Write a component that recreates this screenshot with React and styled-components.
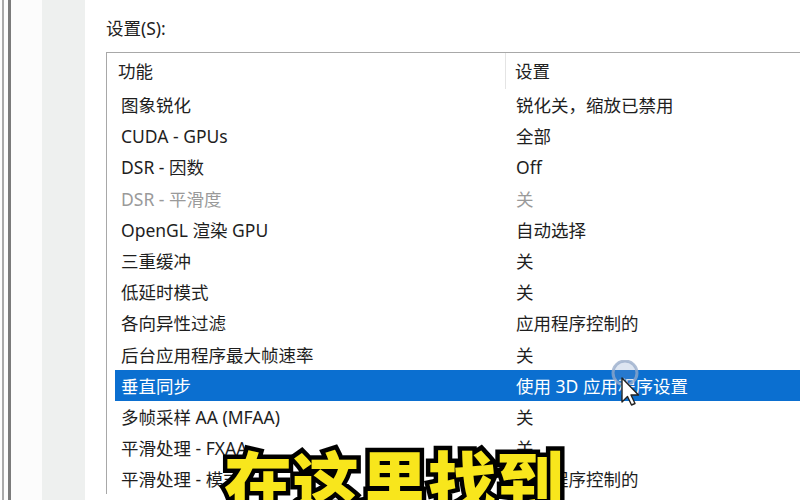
import React from "react";
import styled, { createGlobalStyle } from "styled-components";

const Global = createGlobalStyle`
  html, body { margin: 0; padding: 0; background: #fff; }
  body { font-family: "Noto Sans", "Noto Sans CJK SC", sans-serif; }
`;

const Screen = styled.div`
  position: relative;
  width: 800px;
  height: 500px;
  overflow: hidden;
  display: flex;
  background: #fff;
`;

const FrameEdge = styled.div`
  width: 42px;
  flex: none;
  display: flex;
  background: #fcfcfc;
`;

const EdgeLine = styled.div`
  width: ${(p) => p.$w}px;
  margin-left: ${(p) => p.$ml}px;
  background: ${(p) => p.$c};
  flex: none;
`;

const SidePanel = styled.div`
  width: 43px;
  flex: none;
  background: #eef0ef;
`;

const Content = styled.div`
  flex: 1;
  padding-left: 21px;
  display: flex;
  flex-direction: column;
  min-width: 0;
`;

const Label = styled.div`
  flex: none;
  height: 52px;
  display: flex;
  align-items: center;
  padding-top: 3px;
  box-sizing: border-box;
  font-family: "Noto Sans", "Noto Sans CJK SC", sans-serif;
  font-size: 17.5px;
  color: #222;
`;

const ListBox = styled.div`
  flex: none;
  border-top: 1px solid #a8a8a8;
  border-left: 1px solid #a8a8a8;
  margin-right: -20px;
  display: flex;
  flex-direction: column;
`;

const Header = styled.div`
  height: 36px;
  flex: none;
  display: flex;
  align-items: center;
  font-family: "Noto Sans CJK SC", sans-serif;
  font-size: 17.5px;
  color: #222;
`;

const HeadCell = styled.div`
  height: 100%;
  display: flex;
  align-items: center;
  box-sizing: border-box;
  padding-left: ${(p) => p.$pl}px;
  width: ${(p) => (p.$w ? p.$w + "px" : "auto")};
  flex: ${(p) => (p.$w ? "none" : "1")};
  border-right: ${(p) => (p.$sep ? "1px solid #e4e4e4" : "none")};
  padding-bottom: 2px;
`;

const Row = styled.div`
  height: 31.2px;
  flex: none;
  margin-left: 8px;
  display: flex;
  align-items: center;
  background: ${(p) => (p.$sel ? "#0b6fd0" : "transparent")};
  color: ${(p) => (p.$sel ? "#fff" : p.$dim ? "#9a9a9a" : "#1e1e1e")};
  font-family: "Noto Sans", "Noto Sans CJK SC", sans-serif;
  font-size: 17.5px;
  white-space: nowrap;
`;

const Cell = styled.div`
  box-sizing: border-box;
  padding-left: ${(p) => p.$pl}px;
  width: ${(p) => (p.$w ? p.$w + "px" : "auto")};
  flex: ${(p) => (p.$w ? "none" : "1")};
  overflow: hidden;
`;

const Cursor = styled.div`
  position: absolute;
  left: 608px;
  top: 360px;
  width: 40px;
  height: 50px;
`;

const Caption = styled.div`
  position: absolute;
  left: 224px;
  top: 446px;
  font-family: "Noto Sans CJK SC", sans-serif;
  font-weight: 900;
  font-size: 68px;
  line-height: 1;
  color: #f8e61c;
  -webkit-text-stroke: 9px #000;
  paint-order: stroke fill;
  white-space: nowrap;
`;

const rows = [
  ["图象锐化", "锐化关，缩放已禁用"],
  ["CUDA - GPUs", "全部"],
  ["DSR - 因数", "Off"],
  ["DSR - 平滑度", "关", "dim"],
  ["OpenGL 渲染 GPU", "自动选择"],
  ["三重缓冲", "关"],
  ["低延时模式", "关"],
  ["各向异性过滤", "应用程序控制的"],
  ["后台应用程序最大帧速率", "关"],
  ["垂直同步", "使用 3D 应用程序设置", "sel"],
  ["多帧采样 AA (MFAA)", "关"],
  ["平滑处理 - FXAA", "关"],
  ["平滑处理 - 模式", "应用程序控制的"],
];

export default function App() {
  return (
    <>
      <Global />
      <Screen>
        <FrameEdge>
          <EdgeLine $w={2} $ml={2} $c="#a9a9a9" />
          <EdgeLine $w={3} $ml={4} $c="#7b7b7b" />
        </FrameEdge>
        <SidePanel />
        <Content>
          <Label>设置(S):</Label>
          <ListBox>
            <Header>
              <HeadCell $w={399} $pl={11} $sep>功能</HeadCell>
              <HeadCell $pl={9}>设置</HeadCell>
            </Header>
            {rows.map(([a, b, f], i) => (
              <Row key={i} $sel={f === "sel"} $dim={f === "dim"}>
                <Cell $w={401} $pl={6}>{a}</Cell>
                <Cell $pl={0}>{b}</Cell>
              </Row>
            ))}
          </ListBox>
        </Content>
        <Cursor>
          <svg width="40" height="50" viewBox="0 0 40 50">
            <circle cx="17" cy="13" r="12" fill="rgba(120,150,200,0.25)" stroke="rgba(150,170,200,0.75)" strokeWidth="3" />
            <path d="M14 18 L14 42 L19.5 36.5 L23.5 45 L27 43.5 L23 35 L30.5 35 Z" fill="#fff" stroke="#222" strokeWidth="1.4" strokeLinejoin="round" />
          </svg>
        </Cursor>
        <Caption>在这里找到</Caption>
      </Screen>
    </>
  );
}
